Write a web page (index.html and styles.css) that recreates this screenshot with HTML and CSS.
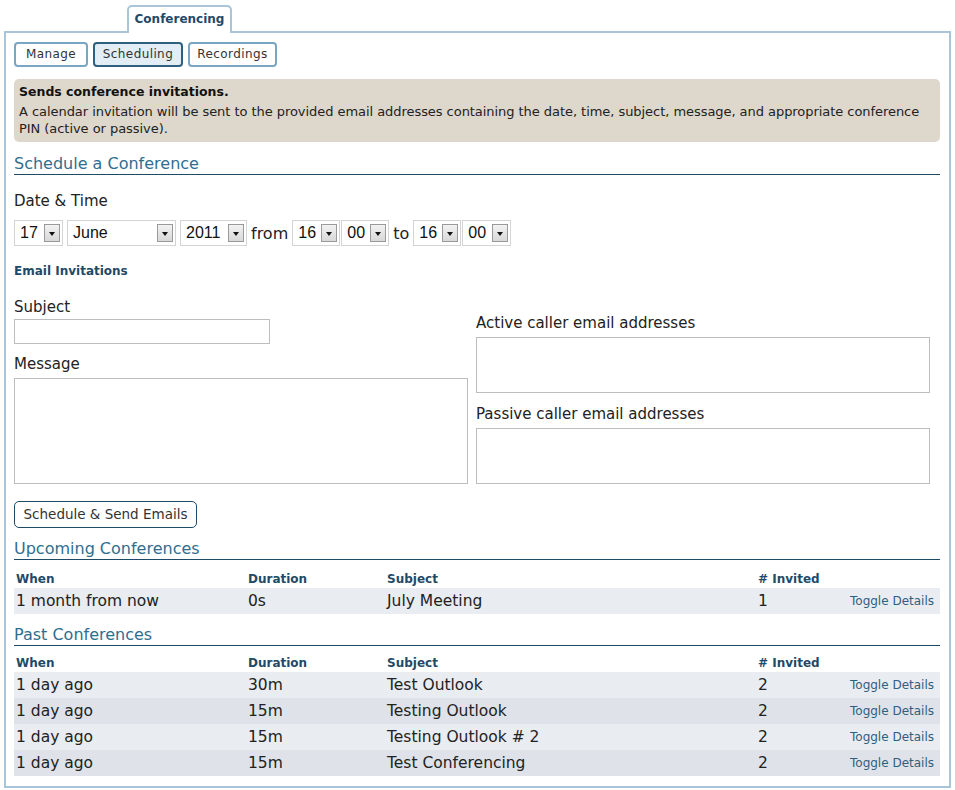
FILE: index.html
```html
<!DOCTYPE html>
<html>
<head>
<meta charset="utf-8">
<link rel="stylesheet" href="styles.css">
</head>
<body>
<div class="page">
  <div class="tabbar"><div class="tab">Conferencing</div></div>
  <div class="panel">
    <div class="subnav">
      <span class="btn w-manage">Manage</span>
      <span class="btn active w-sched">Scheduling</span>
      <span class="btn w-rec">Recordings</span>
    </div>
    <div class="info">
      <div class="info-title">Sends conference invitations.</div>
      <div class="info-text">A calendar invitation will be sent to the provided email addresses containing the date, time, subject, message, and appropriate conference PIN (active or passive).</div>
    </div>
    <h2 class="section">Schedule a Conference</h2>
    <div class="label dt">Date &amp; Time</div>
    <div class="selrow">
      <span class="sel w49"><span class="val">17</span><span class="arr"></span></span>
      <span class="sel w109"><span class="val">June</span><span class="arr"></span></span>
      <span class="sel w67"><span class="val">2011</span><span class="arr"></span></span>
      <span class="word">from</span>
      <span class="sel w48"><span class="val">16</span><span class="arr"></span></span>
      <span class="sel w48 tight"><span class="val">00</span><span class="arr"></span></span>
      <span class="word">to</span>
      <span class="sel w48"><span class="val">16</span><span class="arr"></span></span>
      <span class="sel w49 tight"><span class="val">00</span><span class="arr"></span></span>
    </div>
    <div class="subhead">Email Invitations</div>
    <div class="formgrid">
      <div class="col-left">
        <div class="label">Subject</div>
        <div class="input subj"></div>
        <div class="label msg-label">Message</div>
        <div class="input msg"></div>
      </div>
      <div class="col-right">
        <div class="label">Active caller email addresses</div>
        <div class="input addr"></div>
        <div class="label pas-label">Passive caller email addresses</div>
        <div class="input addr"></div>
      </div>
    </div>
    <div class="submit-row"><span class="btn2">Schedule &amp; Send Emails</span></div>

    <h2 class="section s2">Upcoming Conferences</h2>
    <table class="conf">
      <tr class="head"><th class="c1">When</th><th class="c2">Duration</th><th class="c3">Subject</th><th class="c4"># Invited</th><th class="c5"></th></tr>
      <tr class="odd"><td>1 month from now</td><td>0s</td><td>July Meeting</td><td>1</td><td class="tog">Toggle Details</td></tr>
    </table>

    <h2 class="section s3">Past Conferences</h2>
    <table class="conf past">
      <tr class="head"><th class="c1">When</th><th class="c2">Duration</th><th class="c3">Subject</th><th class="c4"># Invited</th><th class="c5"></th></tr>
      <tr class="odd"><td>1 day ago</td><td>30m</td><td>Test Outlook</td><td>2</td><td class="tog">Toggle Details</td></tr>
      <tr class="even"><td>1 day ago</td><td>15m</td><td>Testing Outlook</td><td>2</td><td class="tog">Toggle Details</td></tr>
      <tr class="odd"><td>1 day ago</td><td>15m</td><td>Testing Outlook # 2</td><td>2</td><td class="tog">Toggle Details</td></tr>
      <tr class="even"><td>1 day ago</td><td>15m</td><td>Test Conferencing</td><td>2</td><td class="tog">Toggle Details</td></tr>
    </table>
  </div>
</div>
</body>
</html>
```

FILE: styles.css
```css
* { box-sizing: border-box; }
body {
  margin: 0;
  background: #fff;
  font-family: "DejaVu Sans", "Liberation Sans", sans-serif;
  color: #222;
}
.page { padding: 5px 4px 0 4px; width: 955px; }
.tabbar { height: 28px; position: relative; z-index: 2; }
.tab {
  margin-left: 123px;
  width: 105px;
  height: 28px;
  border: 2px solid #a9c5d8;
  border-bottom: none;
  border-radius: 5px 5px 0 0;
  background: #fff;
  color: #1f4a68;
  font-weight: bold;
  font-size: 12px;
  text-align: center;
  line-height: 24px;
}
.panel {
  margin-top: -2px;
  width: 947px;
  height: 757px;
  border: 2px solid #a9c5d8;
  padding: 9px 9px 8px 8px;
}
.subnav { display: flex; gap: 5px; }
.btn {
  display: inline-block;
  height: 25px;
  border: 2px solid #79a6c2;
  border-radius: 4px;
  font-size: 12px;
  letter-spacing: 0.4px;
  color: #333;
  text-align: center;
  line-height: 21px;
  background: #fff;
}
.btn.active { border-color: #30607f; background: #e2edf5; }
.w-manage { width: 74px; }
.w-sched { width: 90px; }
.w-rec { width: 89px; }
.info {
  margin-top: 12px;
  background: #ddd7cc;
  border-radius: 5px;
  height: 63px;
  padding: 4px 5px;
  font-size: 13px;
  line-height: 17px;
  color: #222;
}
.info-title { font-weight: bold; color: #111; font-size: 12.5px; margin-bottom: 3px; }
.info-text { letter-spacing: -0.05px; }
.section {
  margin: 0;
  font-weight: normal;
  font-size: 16px;
  color: #2f6e8f;
  border-bottom: 1px solid #1e4a64;
  height: 22px;
  line-height: 22px;
  margin-top: 11px;
}
.label { font-size: 15px; color: #222; line-height: 20px; }
.dt { margin-top: 16px; }
.selrow { display: flex; align-items: center; margin-top: 9px; height: 26px; }
.sel {
  display: inline-flex;
  align-items: center;
  justify-content: space-between;
  height: 26px;
  border: 1px solid #d4d4d4;
  padding: 0 2px 0 5px;
  font-size: 15px;
  margin-right: 4px;
  background: #fff;
}
.sel.tight { margin-left: -3px; }
.val { font-family: "Liberation Sans", sans-serif; font-size: 16px; color: #111; }
.arr {
  width: 16px;
  height: 18px;
  background: linear-gradient(#f2f2f2, #d8d8d8);
  border: 1px solid #9a9a9a;
  position: relative;
}
.arr::after {
  content: "";
  position: absolute;
  left: 4px;
  top: 7px;
  border-left: 3px solid transparent;
  border-right: 3px solid transparent;
  border-top: 4px solid #111;
}
.w49 { width: 49px; }
.w48 { width: 48px; }
.w109 { width: 109px; }
.w67 { width: 67px; }
.word { font-size: 16px; color: #222; margin: 0 4px 0 0; }
.subhead { margin-top: 18px; font-size: 12px; font-weight: bold; color: #1f4a68; height: 20px; }
.formgrid { display: flex; margin-top: 13px; }
.col-left { width: 462px; }
.col-right { width: 454px; padding-top: 16px; }
.input { border: 1px solid #bdbdbd; background: #fff; }
.subj { width: 256px; height: 25px; margin-top: 2px; }
.msg-label { margin-top: 10px; }
.msg { width: 454px; height: 106px; margin-top: 4px; }
.addr { width: 454px; height: 56px; margin-top: 4px; }
.pas-label { margin-top: 11px; }
.submit-row { margin-top: 17px; }
.btn2 {
  display: inline-block;
  width: 183px;
  height: 27px;
  border: 1px solid #1e4a64;
  border-radius: 5px;
  font-size: 13.5px;
  color: #333;
  text-align: center;
  line-height: 25px;
}
.s2 { margin-top: 10px; }
.s3 { margin-top: 10px; }
.conf { width: 926px; border-collapse: collapse; margin-top: 6px; }
.conf.past { margin-top: 4px; }
.conf th {
  text-align: left;
  font-size: 12px;
  font-weight: bold;
  color: #1f4a68;
  height: 22px;
  padding: 4px 0 0 2px;
  line-height: 16px;
}
.conf td {
  font-size: 15.5px;
  height: 26px;
  padding: 0 0 0 2px;
  color: #222;
}
.c1 { width: 232px; }
.c2 { width: 139px; }
.c3 { width: 371px; }
.c4 { width: 80px; }
.conf tr.odd td { background: #e9ecf1; }
.conf tr.even td { background: #dfe3e9; }
.conf td.tog { font-size: 12px; color: #2f5f7f; text-align: right; padding-right: 6px; }
```
